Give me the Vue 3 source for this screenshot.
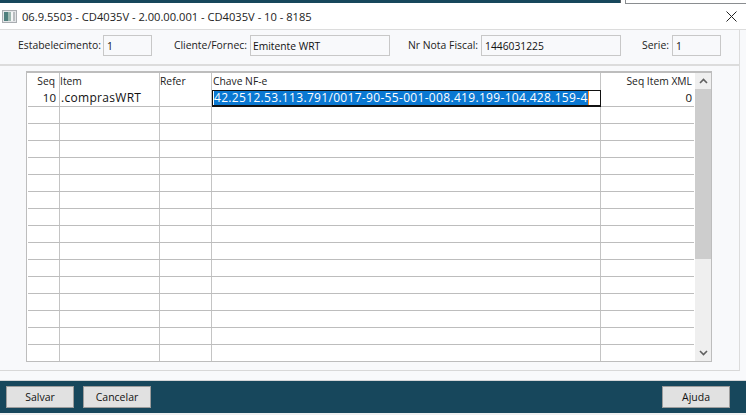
<script setup>
const emptyRows = Array.from({ length: 15 })
const columns = [
  { key: 'seq', cls: 'c-seq' },
  { key: 'item', cls: 'c-item' },
  { key: 'refer', cls: 'c-refer' },
  { key: 'chave', cls: 'c-chave' },
  { key: 'xml', cls: 'c-xml' }
]
</script>

<template>
  <div class="page">
    <div class="topstrip">
      <div class="topstrip-dark"></div>
      <div class="topstrip-edge"></div>
      <div class="topstrip-white"></div>
      <div class="topstrip-light"></div>
    </div>
    <header class="titlebar">
      <svg class="appicon" width="15" height="13" viewBox="0 0 15 13">
        <rect x="0.5" y="0.5" width="14" height="12" fill="#e4e6e8" stroke="#a9adb1" />
        <rect x="2" y="2" width="4" height="9" fill="#4f7f7d" />
        <rect x="6" y="2" width="3" height="9" fill="#9db8b0" />
        <rect x="9" y="2" width="2" height="9" fill="#f4f6f6" />
        <rect x="11" y="2" width="2" height="9" fill="#b9bdc0" />
      </svg>
      <span class="title">06.9.5503 - CD4035V - 2.00.00.001 - CD4035V - 10 - 8185</span>
      <svg class="close" width="11" height="11" viewBox="0 0 11 11">
        <path d="M0.5 0.5L10.5 10.5M10.5 0.5L0.5 10.5" stroke="#222" stroke-width="1" fill="none" />
      </svg>
    </header>
    <main class="body">
      <div class="panel">
        <section class="fields">
          <label class="lab l1">Estabelecimento:</label>
          <div class="inp i1">1</div>
          <label class="lab l2">Cliente/Fornec:</label>
          <div class="inp i2">Emitente WRT</div>
          <label class="lab l3">Nr Nota Fiscal:</label>
          <div class="inp i3">1446031225</div>
          <label class="lab l4">Serie:</label>
          <div class="inp i4">1</div>
        </section>
        <section class="gridwrap">
          <div class="grid">
            <div class="table">
              <div class="row head">
                <div class="cell c-seq num">Seq</div>
                <div class="cell c-item">Item</div>
                <div class="cell c-refer">Refer</div>
                <div class="cell c-chave">Chave NF-e</div>
                <div class="cell c-xml num">Seq Item XML</div>
              </div>
              <div class="row data">
                <div class="cell c-seq num">10</div>
                <div class="cell c-item">.comprasWRT</div>
                <div class="cell c-refer"></div>
                <div class="cell c-chave editing"><span class="sel">42.2512.53.113.791/0017-90-55-001-008.419.199-104.428.159-4</span><span class="caret"></span></div>
                <div class="cell c-xml num">0</div>
              </div>
              <div v-for="(r, i) in emptyRows" :key="i" class="row data">
                <div v-for="c in columns" :key="c.key" class="cell" :class="c.cls"></div>
              </div>
            </div>
            <div class="scrollbar">
              <div class="sb-btn">
                <svg width="9" height="6" viewBox="0 0 9 6"><path d="M1 5L4.5 1.5L8 5" stroke="#606060" stroke-width="1.6" fill="none" /></svg>
              </div>
              <div class="sb-track"><div class="sb-thumb"></div></div>
              <div class="sb-btn">
                <svg width="9" height="6" viewBox="0 0 9 6"><path d="M1 1L4.5 4.5L8 1" stroke="#606060" stroke-width="1.6" fill="none" /></svg>
              </div>
            </div>
          </div>
        </section>
      </div>
      <div class="gap"></div>
    </main>
    <footer class="footer">
      <button class="btn">Salvar</button>
      <button class="btn">Cancelar</button>
      <button class="btn ajuda">Ajuda</button>
    </footer>
    <div class="bottom"></div>
  </div>
</template>

<style>
html, body { margin: 0; background: #f0f0f0; }
</style>

<style scoped>
.page {
  width: 746px;
  height: 415px;
  display: flex;
  flex-direction: column;
  overflow: hidden;
  font-family: "Open Sans", "Noto Sans", sans-serif;
  font-size: 10px;
  color: #111;
  background: #f8f9fb;
}
.topstrip { height: 4px; display: flex; background: #fff; flex: none; }
.topstrip-dark { width: 620px; height: 3px; background: #17475c; }
.topstrip-edge { width: 1px; height: 3px; background: #5a5f63; }
.topstrip-white { width: 4px; }
.topstrip-light { flex: 1; height: 4px; box-sizing: border-box; border-left: 1px solid #8a8d90; border-bottom: 1px solid #8a8d90; background: #fff; }
.titlebar {
  height: 25px;
  flex: none;
  background: #fff;
  display: flex;
  align-items: center;
  padding-left: 2px;
  padding-right: 9px;
  padding-bottom: 1px;
  box-sizing: border-box;
}
.appicon { flex: none; }
.title { margin-left: 5px; font-size: 11.15px; color: #222; }
.close { margin-left: auto; }
.body { flex: 1; display: flex; flex-direction: column; border-top: 1px solid #dcdcdc; }
.panel {
  height: 341px;
  box-sizing: border-box;
  border-right: 1px solid #dcdcdc;
  border-bottom: 1px solid #d8d8d8;
  margin-right: 6px;
  display: flex;
  flex-direction: column;
}
.fields {
  height: 36px;
  flex: none;
  box-sizing: border-box;
  border-bottom: 2px solid #dcdcdc;
  display: flex;
  align-items: center;
  padding-bottom: 3px;
}
.lab { font-size: 10.4px; color: #222; white-space: nowrap; text-align: right; flex: none; padding-bottom: 1px; }
.inp {
  height: 21px;
  flex: none;
  box-sizing: border-box;
  border: 1px solid #c8c8c8;
  background: #f8f9fb;
  font-size: 10.3px;
  line-height: 21px;
  padding-left: 3px;
  color: #111;
  margin-left: 3px;
}
.l1 { margin-left: 18px; width: 82px; }
.i1 { width: 49px; }
.l2 { margin-left: 21px; width: 74px; }
.i2 { width: 140px; padding-left: 2px; }
.l3 { margin-left: 18px; width: 70px; }
.i3 { width: 140px; }
.l4 { margin-left: 20px; width: 28px; }
.i4 { width: 49px; }
.gridwrap { flex: 1; padding: 5px 0 0 26px; display: flex; flex-direction: column; }
.grid {
  width: 686px;
  height: 291px;
  box-sizing: border-box;
  border: 1px solid #bdbdbd;
  border-top-width: 2px;
  background: #fff;
  display: flex;
  overflow: hidden;
}
.table { width: 667px; flex: none; }
.row { display: flex; box-sizing: border-box; height: 17px; border-bottom: 1px solid #bdbdbd; margin-left: 1px; }
.row.head { border-bottom: none; }
.cell {
  box-sizing: border-box;
  height: 100%;
  border-right: 1px solid #c4c4c4;
  padding: 0 1px;
  white-space: nowrap;
  line-height: 16px;
  font-size: 10.3px;
  overflow: hidden;
}
.head .cell { color: #222; }
.num { text-align: right; padding-right: 3px; }
.head .c-seq { padding-right: 4px; }
.c-seq { width: 32px; flex: none; }
.c-item { width: 100px; flex: none; padding-left: 0; }
.c-refer { width: 52px; flex: none; padding-left: 0; }
.c-chave { width: 389px; flex: none; }
.c-xml { width: 93px; flex: none; border-right: none; padding-right: 2px; }
.head .c-xml { padding-right: 2px; }
.data .cell { font-size: 11.5px; }
.data .c-item { font-size: 12px; letter-spacing: 0.3px; padding-left: 1px; }
.editing {
  display: flex;
  align-items: center;
  height: 17px;
  border: 2px solid #111;
  border-top-width: 1px;
  border-right-width: 1px;
  border-left-width: 1px;
  padding: 0 0 0 1px;
  background: #fff;
}
.sel {
  background: #0a78d2;
  color: #fff;
  font-size: 12px;
  letter-spacing: 0.32px;
  line-height: 14px;
  height: 14px;
}
.caret { width: 1px; height: 14px; background: #ff8a1f; flex: none; }
.scrollbar { width: 16px; flex: none; display: flex; flex-direction: column; background: #efefef; margin-left: 1px; }
.sb-btn { height: 16px; display: flex; align-items: center; justify-content: center; flex: none; }
.sb-track { flex: 1; }
.sb-thumb { height: 170px; background: #cdcdcd; }
.gap { flex: 1; }
.footer {
  height: 33px;
  flex: none;
  box-sizing: border-box;
  border-top: 1px solid #d4d6d8;
  background: #17475c;
  display: flex;
  align-items: center;
  padding: 0 16px 0 6px;
  gap: 9px;
}
.btn {
  width: 68px;
  height: 22px;
  box-sizing: border-box;
  border: 1px solid #9c9c9c;
  background: #e1e1e1;
  font-family: inherit;
  font-size: 10.5px;
  color: #111;
  padding: 0;
  margin: 0;
}
.ajuda { margin-left: auto; }
.bottom { height: 2px; flex: none; background: #f0f0f0; }
</style>
